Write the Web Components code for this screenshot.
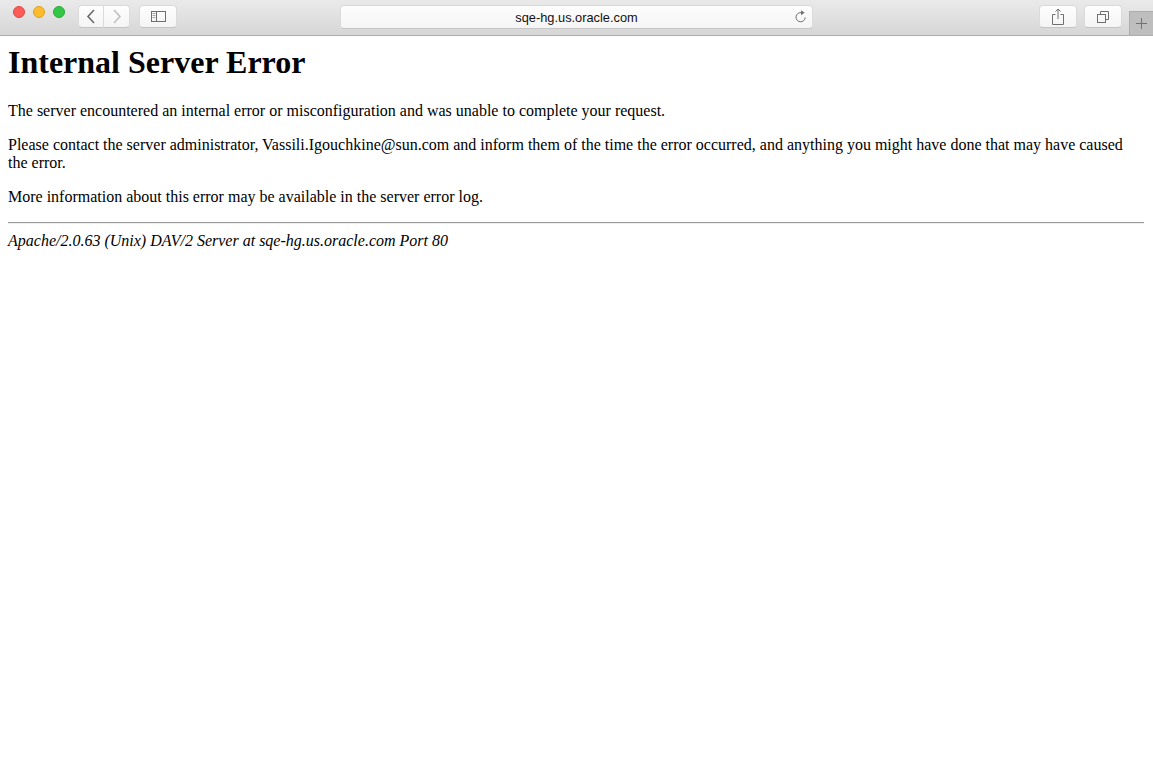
<!DOCTYPE html>
<html lang="en">
<head>
<meta charset="utf-8">
<title>Internal Server Error</title>
<style>
html,body{margin:0;padding:0;background:#fff;height:100%}
body{display:flex;flex-direction:column;height:780px;overflow:hidden;font-family:"Liberation Serif",serif}
</style>
</head>
<body>
<browser-toolbar url="sqe-hg.us.oracle.com"></browser-toolbar>
<error-page>
  <h-title slot="title">Internal Server Error</h-title>
</error-page>
<script>
const make=(name,html,setup)=>customElements.define(name,class extends HTMLElement{
  constructor(){super();this.attachShadow({mode:'open'}).innerHTML=html}
  connectedCallback(){setup&&setup(this)}
});
make('traffic-light',`<style>:host{display:block;width:12px;height:12px;border-radius:50%;box-sizing:border-box;background:var(--c);border:.5px solid var(--b)}</style>`);
make('tool-button',`<style>
:host{display:flex;align-items:center;justify-content:center;box-sizing:border-box;height:23px;width:var(--w,38px);background:linear-gradient(#fefefe,#f4f4f4);border:1px solid #dbdadb;border-bottom-color:#c4c3c4;border-radius:var(--r,4px)}
svg{display:block}
</style><slot></slot>`);
make('browser-toolbar',`<style>
:host{display:block;flex:none;height:36px;box-sizing:border-box;background:linear-gradient(#ebeaeb,#d7d6d7);border-bottom:1px solid #aeadae;font-family:"Liberation Sans",Arial,sans-serif}
.bar{display:flex;align-items:flex-start;height:35px;padding:5px 0 0 13px;box-sizing:border-box;position:relative}
.lights{display:flex;gap:8px;margin-top:1px}
.nav{display:flex;margin-left:13px}
.side{margin-left:9px}
.url{position:absolute;left:340px;top:5px;width:473px;height:24px;box-sizing:border-box;background:linear-gradient(#fdfdfd,#f5f5f5);border:1px solid #dbdadb;border-bottom-color:#c6c5c6;border-radius:4px;display:flex;align-items:center;justify-content:center;font-size:12.8px;color:#111}
.url svg{position:absolute;right:5px;top:4px}
.right{position:absolute;left:1039px;top:5px;display:flex;gap:7px}
.tab{position:absolute;right:0;top:11px;width:24px;height:24px;box-sizing:border-box;background:#bfbebf;border-left:1px solid #aeadae;border-top:1px solid #aeadae;display:flex;align-items:center;justify-content:center}
</style>
<div class="bar">
  <div class="lights">
    <traffic-light style="--c:#fc5b57;--b:#e3443f"></traffic-light>
    <traffic-light style="--c:#fdbc2e;--b:#dfa023"></traffic-light>
    <traffic-light style="--c:#33c748;--b:#27aa35"></traffic-light>
  </div>
  <div class="nav">
    <tool-button style="--w:26px;--r:4px 0 0 4px"><svg width="10" height="15" viewBox="0 0 10 15" fill="none" stroke="#6a6a6a" stroke-width="1.6"><path d="M8 1 2 7.500 8 14"/></svg></tool-button>
    <tool-button style="--w:27px;--r:0 4px 4px 0;margin-left:-1px"><svg width="10" height="15" viewBox="0 0 10 15" fill="none" stroke="#c0c0c0" stroke-width="1.6"><path d="M2 1 8 7.500 2 14"/></svg></tool-button>
  </div>
  <tool-button class="side" style="--w:38px"><svg width="15" height="11" viewBox="0 0 15 11" fill="none" stroke="#6f6f6f"><rect x=".5" y=".5" width="14" height="10"/><path d="M5.500 .5v10"/><path d="M1.500 2.500h3M1.500 4.500h3M1.500 6.500h3" stroke="#a5a5a5"/></svg></tool-button>
  <div class="url"><span id="u"></span><svg width="13" height="14" viewBox="0 0 13 14" fill="none" stroke="#6f6f6f"><path d="M7 2.600A4.600 4.600 0 1 0 11.200 7.400"/><path d="M7 .2 10.600 2.700 7 5.200z" fill="#6f6f6f" stroke="none"/></svg></div>
  <div class="right">
    <tool-button><svg width="12" height="17" viewBox="0 0 12 17" fill="none" stroke="#6f6f6f"><path d="M3.500 6.500h-3v10h11v-10h-3"/><path d="M6 11V1M3.500 3.500 6 1l2.500 2.500"/></svg></tool-button>
    <tool-button><svg width="12" height="12" viewBox="0 0 12 12" fill="none" stroke="#6f6f6f"><rect x=".5" y="3.500" width="8" height="8"/><path d="M3.500 3.500v-3h8v8h-3"/></svg></tool-button>
  </div>
  <div class="tab"><svg width="11" height="11" viewBox="0 0 11 11" stroke="#727172"><path d="M5.500 0v11M0 5.500h11"/></svg></div>
</div>`,el=>{el.shadowRoot.getElementById('u').textContent=el.getAttribute('url')});
make('h-title',`<style>:host{display:block;font-size:32px;font-weight:bold;line-height:37px;margin:0 0 21px}</style><slot></slot>`);
make('error-page',`<style>
:host{display:block;flex:1;padding:8px;font:16px/18px "Liberation Serif","Times New Roman",serif;color:#000;background:#fff}
p{margin:0 0 16px}
hr{display:block;height:2px;box-sizing:border-box;margin:0 1px 8px 0;border:0;border-top:1px solid #9a9a9a;border-bottom:1px solid #eee}
address{font-style:italic;display:block}
</style>
<slot name="title"></slot>
<p>The server encountered an internal error or misconfiguration and was unable to complete your request.</p>
<p>Please contact the server administrator, Vassili.Igouchkine@sun.com and inform them of the time the error occurred, and anything you might have done that may have caused the error.</p>
<p>More information about this error may be available in the server error log.</p>
<hr>
<address>Apache/2.0.63 (Unix) DAV/2 Server at sqe-hg.us.oracle.com Port 80</address>`);
</script>
</body>
</html>
